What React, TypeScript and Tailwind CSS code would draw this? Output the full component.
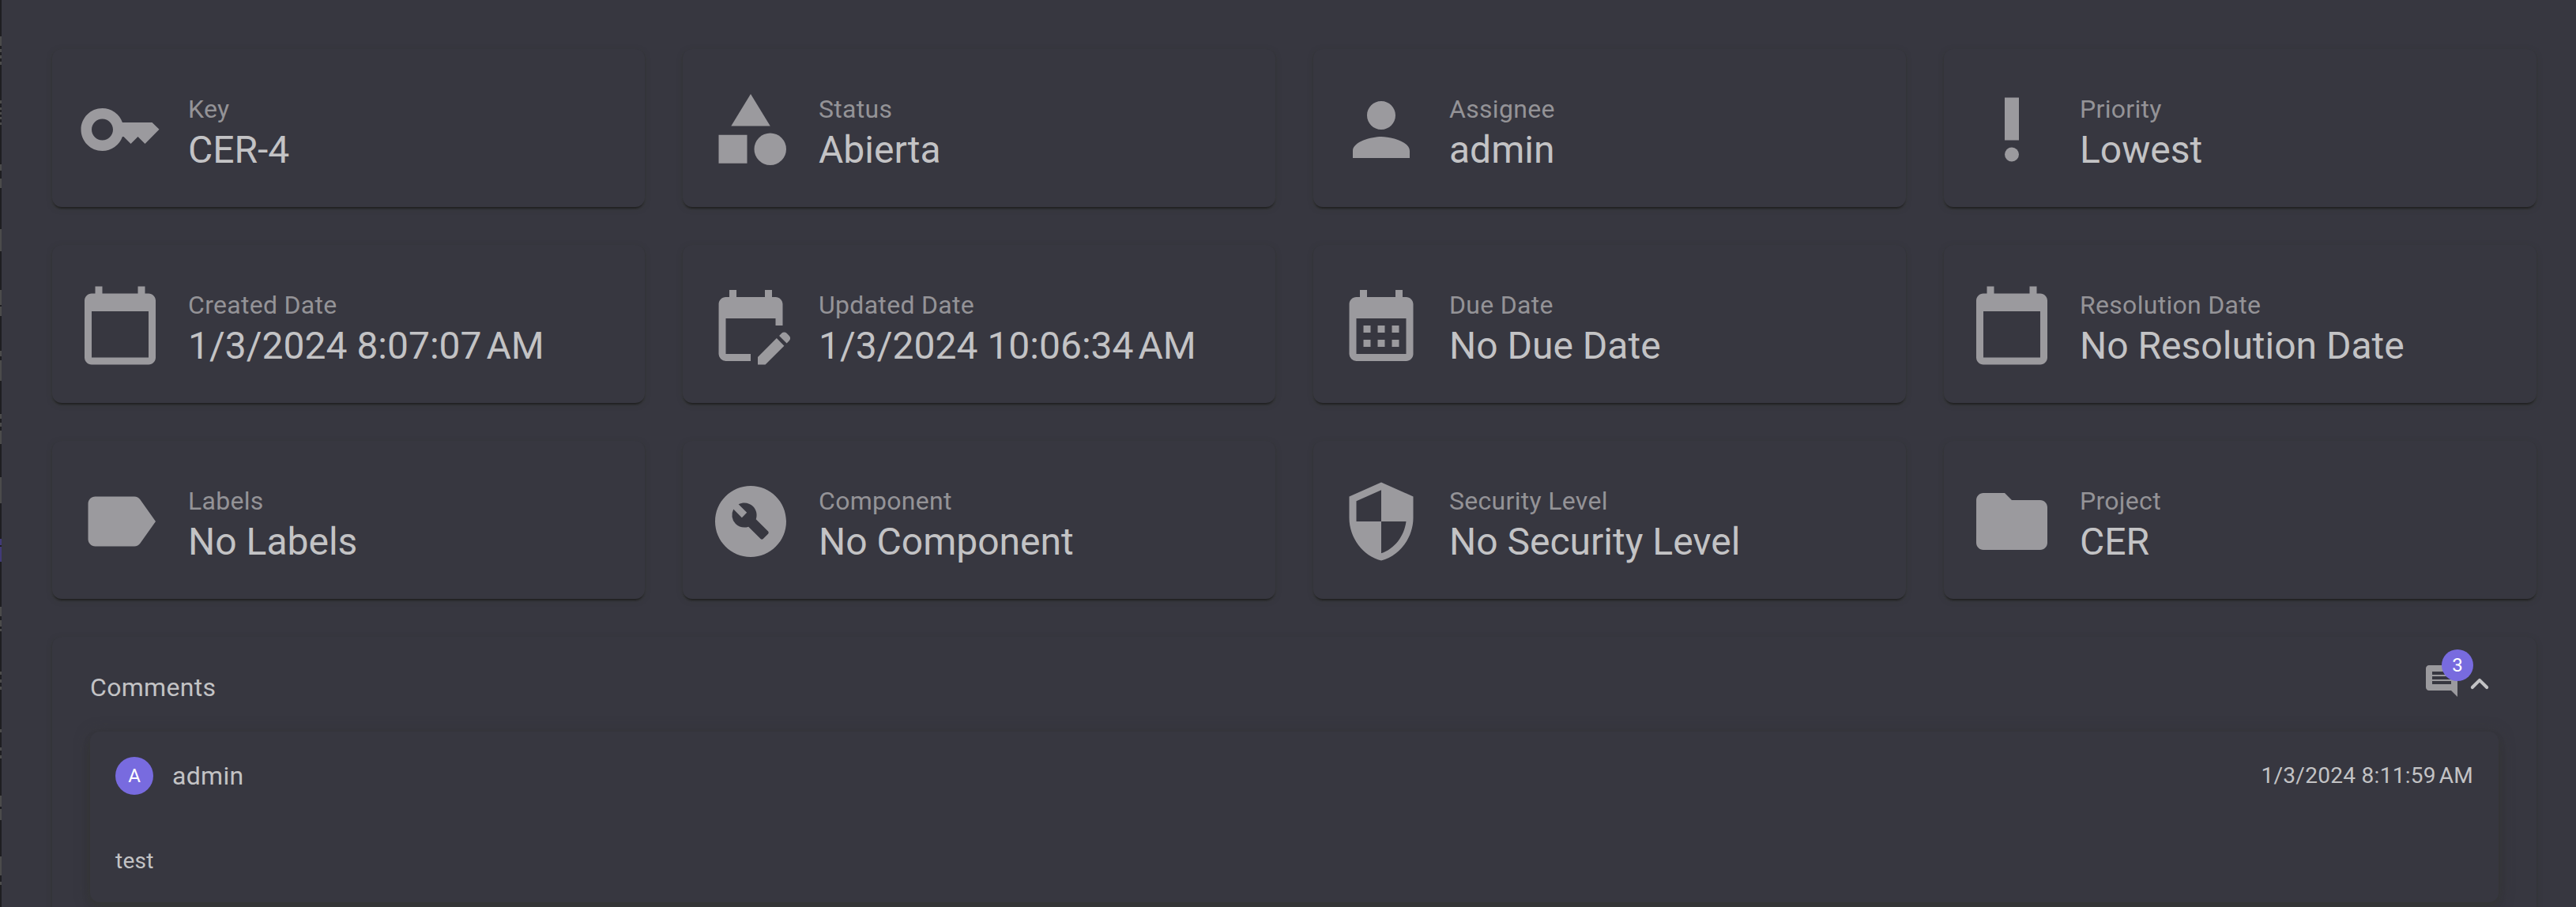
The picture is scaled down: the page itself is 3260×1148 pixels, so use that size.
import type { IconType } from "react-icons";
import {
  MdKey, MdCategory, MdPerson, MdPriorityHigh, MdCalendarToday, MdEditCalendar,
  MdCalendarMonth, MdLabel, MdBuildCircle, MdSecurity, MdFolder, MdComment,
} from "react-icons/md";

const fields: { icon: IconType; label: string; value: string }[] = [
  { icon: MdKey, label: "Key", value: "CER-4" },
  { icon: MdCategory, label: "Status", value: "Abierta" },
  { icon: MdPerson, label: "Assignee", value: "admin" },
  { icon: MdPriorityHigh, label: "Priority", value: "Lowest" },
  { icon: MdCalendarToday, label: "Created Date", value: "1/3/2024 8:07:07\u202fAM" },
  { icon: MdEditCalendar, label: "Updated Date", value: "1/3/2024 10:06:34\u202fAM" },
  { icon: MdCalendarMonth, label: "Due Date", value: "No Due Date" },
  { icon: MdCalendarToday, label: "Resolution Date", value: "No Resolution Date" },
  { icon: MdLabel, label: "Labels", value: "No Labels" },
  { icon: MdBuildCircle, label: "Component", value: "No Component" },
  { icon: MdSecurity, label: "Security Level", value: "No Security Level" },
  { icon: MdFolder, label: "Project", value: "CER" },
];

const cardShadow =
  "shadow-[0_4px_2px_-2px_rgba(10,12,10,0.36),0_2px_2px_0_rgba(30,32,28,0.25),0_2px_6px_0_rgba(52,55,46,0.5)]";

// Slivers of the page behind the panel: [top, height, accent]
const slivers: [number, number, boolean][] = [
  [46, 12, false], [62, 4, false], [70, 4, false], [78, 4, false],
  [127, 4, false], [136, 3, false], [142, 3, false], [148, 3, false], [155, 3, false],
  [208, 8, false], [226, 12, false], [290, 28, false], [367, 19, false], [388, 12, false],
  [444, 7, false], [456, 26, false], [524, 6, false], [535, 5, false], [545, 17, false],
  [604, 33, false], [682, 8, true], [692, 19, true],
  [768, 12, false], [785, 8, false], [796, 3, false],
  [850, 4, false], [860, 4, false], [869, 4, false],
  [923, 4, false], [946, 4, false], [956, 4, false],
  [1007, 14, false], [1024, 14, false], [1084, 24, false], [1116, 4, false],
];

function FieldCard({ icon: Icon, label, value }: (typeof fields)[number]) {
  return (
    <div className={`flex h-[200px] items-start rounded-xl bg-[#373740] px-8 pt-12 ${cardShadow}`}>
      <Icon className="size-[108px] shrink-0 text-[#9b9a9e]" />
      <div className="ml-8 mt-1.5 whitespace-nowrap">
        <div className="text-[32px] leading-[44px] tracking-[0.3px] text-[#949397]">{label}</div>
        <div className="text-[48px] leading-[60px] text-[#c3c3c5]">{value}</div>
      </div>
    </div>
  );
}

export default function App() {
  return (
    <div className="relative h-[1148px] w-[3260px] overflow-hidden bg-[#373740] pl-[66px] pr-[50px] pt-[62px] font-[Roboto,sans-serif] text-[#c3c3c5]">
      <div className="absolute left-0 top-0 h-full w-0.5 bg-[#1e1e22]">
        {slivers.map(([top, height, accent]) => (
          <div
            key={top}
            className={`absolute left-0 w-full ${accent ? "bg-[#413a78]" : "bg-[#4b4b4b]"}`}
            style={{ top, height }}
          />
        ))}
      </div>

      <div className="grid grid-cols-4 gap-12">
        {fields.map((f) => (
          <FieldCard key={f.label} {...f} />
        ))}
      </div>

      <section className={`mt-12 h-[400px] rounded-xl bg-[#373740] px-12 ${cardShadow}`}>
        <header className="flex h-[120px] items-start justify-between">
          <h2 className="mt-10 text-[32px] leading-[48px] tracking-[0.3px]">Comments</h2>
          <div className="flex">
            <div className="relative mt-8 size-12">
              <MdComment className="size-12 text-[#9b9a9e]" />
              <span className="absolute -top-4 left-6 flex size-10 items-center justify-center rounded-full bg-[#786bdf] text-[24px] leading-none text-white">
                3
              </span>
            </div>
            <svg viewBox="0 0 24 24" className="mt-9 size-12 fill-[#c3c3c5]">
              <path d="M11.29 8.71 6.7 13.3a.996.996 0 1 0 1.41 1.41L12 10.83l3.88 3.88a.996.996 0 1 0 1.41-1.41L12.7 8.71a.996.996 0 0 0-1.41 0z" />
            </svg>
          </div>
        </header>

        <article className="h-[216px] rounded-xl bg-[#373740] p-8 shadow-[0_4px_8px_-2px_rgba(52,54,48,0.35),0_8px_10px_0_rgba(54,55,50,0.3),0_2px_20px_0_rgba(54,56,50,0.4)]">
          <div className="flex h-12 items-center">
            <div className="flex size-12 items-center justify-center rounded-full bg-[#786bdf] text-[24px] leading-none text-white">
              A
            </div>
            <span className="ml-6 text-[32px] leading-[48px] tracking-[0.3px]">admin</span>
            <time className="ml-auto text-[28px] leading-[42px] tracking-[0.3px]">1/3/2024 8:11:59{"\u202f"}AM</time>
          </div>
          <p className="mt-[63px] text-[28px] leading-[42px] tracking-[0.3px]">test</p>
        </article>
      </section>
    </div>
  );
}
